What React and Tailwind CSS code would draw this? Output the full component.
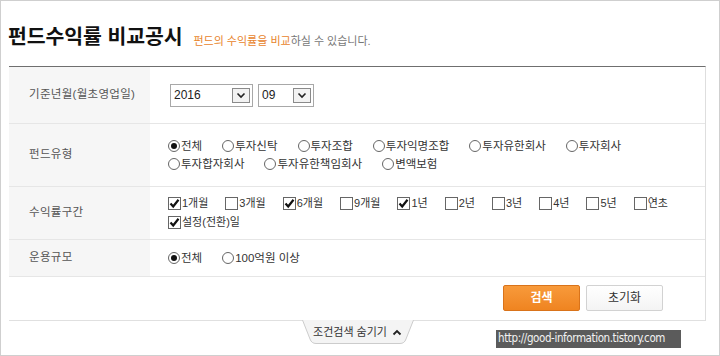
import React from 'react';

const FONT = "font-['Liberation_Sans','Noto_Sans_CJK_KR',sans-serif]";

const Radio = ({ checked, label }) => (
  <label className="flex items-center text-[11.5px] text-[#333] leading-[18px]">
    <span className="w-[12px] h-[12px] rounded-full border border-[#666] bg-white flex items-center justify-center mr-[1px]">
      {checked && <span className="w-[6px] h-[6px] rounded-full bg-[#111]" />}
    </span>
    {label}
  </label>
);

const Check = ({ checked, label }) => (
  <label className="flex items-center text-[11px] text-[#333] leading-[19px]">
    <span className="w-[13px] h-[13px] border border-[#666] bg-white flex items-center justify-center mr-[1px]">
      {checked && (
        <svg width="11" height="11" viewBox="0 0 11 11">
          <path d="M1.5 5.5 L4.2 8.5 L9.5 1.8" fill="none" stroke="#111" strokeWidth="2.2" />
        </svg>
      )}
    </span>
    {label}
  </label>
);

const Select = ({ value, width }) => (
  <div className={`relative h-[23px] border border-[#a8a8a8] bg-white flex items-center pl-[3px] text-[12px] text-[#222] ${width}`}>
    {value}
    <span className="absolute right-[2px] top-[3px] w-[18px] h-[15px] border border-[#8a8a8a] bg-[#f2f2f2] flex items-center justify-center">
      <svg width="10" height="7" viewBox="0 0 10 7">
        <path d="M1.5 1.5 L5 5 L8.5 1.5" fill="none" stroke="#222" strokeWidth="1.6" />
      </svg>
    </span>
  </div>
);

const Row = ({ label, height, children }) => (
  <div className={`grid grid-cols-[141px_1fr] border-b border-[#e6e6e6] ${height}`}>
    <div className="bg-[#f6f6f6] flex items-center pl-[20px] text-[11.5px] tracking-[0.3px] text-[#555]">{label}</div>
    <div className="flex flex-col justify-center pl-[18px]">{children}</div>
  </div>
);

const App = () => {
  return (
    <div className={`w-[720px] h-[356px] border border-[#cfcfcf] bg-white relative overflow-hidden ${FONT}`}>
      {/* header */}
      <div className="flex items-end pl-[7px] pt-[20px] h-[65px] pb-[15px]">
        <h1 className="text-[20.5px] font-bold text-[#111] leading-[28px] tracking-[-0.1px]">펀드수익률 비교공시</h1>
        <p className="ml-[11px] text-[11px] leading-[18px] text-[#777] mb-[1px]">
          <span className="text-[#e8842c]">펀드의 수익률을 비교</span>하실 수 있습니다.
        </p>
      </div>

      <div className="ml-[8px] w-[697px] border-t border-[#6f6f6f] border-r border-r-[#dedede]">
        <Row label="기준년월(월초영업일)" height="h-[57px]">
          <div className="flex items-center gap-[5px] pl-[2px]">
            <Select value="2016" width="w-[83px]" />
            <Select value="09" width="w-[56px]" />
          </div>
        </Row>

        <Row label="펀드유형" height="h-[63px]">
          <div className="flex gap-x-[20px]">
            <Radio checked label="전체" />
            <Radio label="투자신탁" />
            <Radio label="투자조합" />
            <Radio label="투자익명조합" />
            <Radio label="투자유한회사" />
            <Radio label="투자회사" />
          </div>
          <div className="flex gap-x-[20px]">
            <Radio label="투자합자회사" />
            <Radio label="투자유한책임회사" />
            <Radio label="변액보험" />
          </div>
        </Row>

        <Row label="수익률구간" height="h-[53px]">
          <div className="flex gap-x-[17px]">
            <Check checked label="1개월" />
            <Check label="3개월" />
            <Check checked label="6개월" />
            <Check label="9개월" />
            <Check checked label="1년" />
            <Check label="2년" />
            <Check label="3년" />
            <Check label="4년" />
            <Check label="5년" />
            <Check label="연초" />
          </div>
          <div className="flex">
            <Check checked label="설정(전환)일" />
          </div>
        </Row>

        <Row label="운용규모" height="h-[37px]">
          <div className="flex gap-x-[20px]">
            <Radio checked label="전체" />
            <Radio label="100억원 이상" />
          </div>
        </Row>

        <div className="h-[44px] border-b border-[#e0e0e0] flex justify-end items-start pt-[8px] pr-[42px] gap-[6px]">
          <button className="w-[77px] h-[26px] rounded-[2px] border border-[#d9731a] bg-gradient-to-b from-[#f89a3a] to-[#ef8420] text-white text-[12px] font-bold">
            검색
          </button>
          <button className="w-[77px] h-[26px] rounded-[2px] border border-[#d2d2d2] bg-gradient-to-b from-white to-[#f4f4f4] text-[#333] text-[12px]">
            초기화
          </button>
        </div>
      </div>

      {/* toggle tab */}
      <div className="flex justify-center ml-[8px] w-[697px] -mt-[1px]">
        <div className="relative w-[112px] h-[24px] flex items-center justify-center gap-[5px] text-[11px] text-[#333]">
          <svg className="absolute inset-0" width="112" height="24" viewBox="0 0 112 24">
            <path d="M0.5 0 L8 19 Q9.5 23.5 14 23.5 L98 23.5 Q102.5 23.5 104 19 L111.5 0 Z" fill="#f4f4f4" />
            <path d="M0.5 0 L8 19 Q9.5 23.5 14 23.5 L98 23.5 Q102.5 23.5 104 19 L111.5 0" fill="none" stroke="#cccccc" />
          </svg>
          <span className="relative">조건검색 숨기기</span>
          <svg className="relative" width="10" height="7" viewBox="0 0 10 7">
            <path d="M1.5 5.5 L5 2 L8.5 5.5" fill="none" stroke="#222" strokeWidth="1.8" />
          </svg>
        </div>
      </div>

      {/* watermark */}
      <div className="absolute left-[495px] top-[329px] w-[185px] h-[18px] bg-[#5b5b5b] flex items-center pl-[2px] text-[11.5px] text-[#f2f2f2] font-['DejaVu_Sans_Condensed','Liberation_Sans',sans-serif] tracking-[-0.4px]">
        http://good-information.tistory.com
      </div>
    </div>
  );
};

export default App;
